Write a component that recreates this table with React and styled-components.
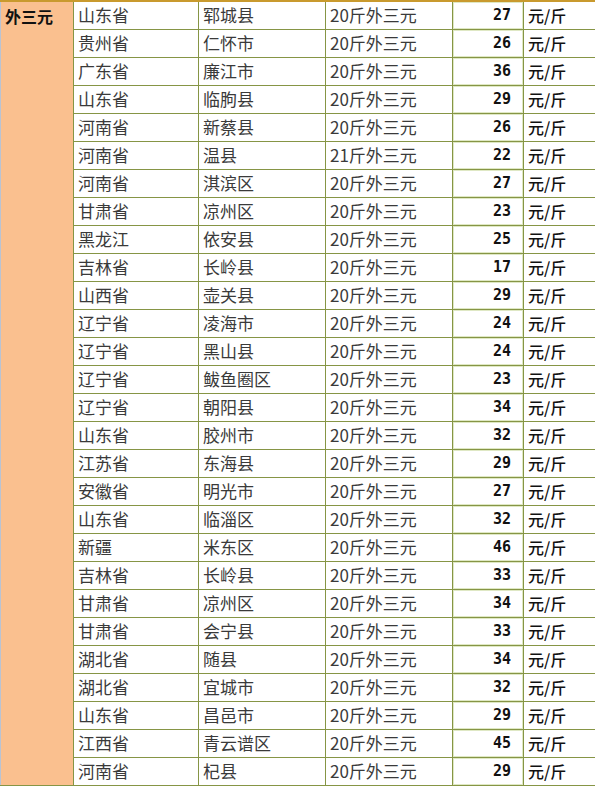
import React from "react";
import styled, { createGlobalStyle } from "styled-components";

const Global = createGlobalStyle`
  html, body { margin: 0; padding: 0; background: #ffffff; }
  body { font-family: "Noto Sans CJK SC", "Noto Sans", sans-serif; }
`;

const rows = [
  ["山东省", "郓城县", "20斤外三元", 27],
  ["贵州省", "仁怀市", "20斤外三元", 26],
  ["广东省", "廉江市", "20斤外三元", 36],
  ["山东省", "临朐县", "20斤外三元", 29],
  ["河南省", "新蔡县", "20斤外三元", 26],
  ["河南省", "温县", "21斤外三元", 22],
  ["河南省", "淇滨区", "20斤外三元", 27],
  ["甘肃省", "凉州区", "20斤外三元", 23],
  ["黑龙江", "依安县", "20斤外三元", 25],
  ["吉林省", "长岭县", "20斤外三元", 17],
  ["山西省", "壶关县", "20斤外三元", 29],
  ["辽宁省", "凌海市", "20斤外三元", 24],
  ["辽宁省", "黑山县", "20斤外三元", 24],
  ["辽宁省", "鲅鱼圈区", "20斤外三元", 23],
  ["辽宁省", "朝阳县", "20斤外三元", 34],
  ["山东省", "胶州市", "20斤外三元", 32],
  ["江苏省", "东海县", "20斤外三元", 29],
  ["安徽省", "明光市", "20斤外三元", 27],
  ["山东省", "临淄区", "20斤外三元", 32],
  ["新疆", "米东区", "20斤外三元", 46],
  ["吉林省", "长岭县", "20斤外三元", 33],
  ["甘肃省", "凉州区", "20斤外三元", 34],
  ["甘肃省", "会宁县", "20斤外三元", 33],
  ["湖北省", "随县", "20斤外三元", 34],
  ["湖北省", "宜城市", "20斤外三元", 32],
  ["山东省", "昌邑市", "20斤外三元", 29],
  ["江西省", "青云谱区", "20斤外三元", 45],
  ["河南省", "杞县", "20斤外三元", 29],
];

const columnWidths = [73, 125, 127, 127, 71, 72];

const Sheet = styled.table`
  border-collapse: collapse;
  table-layout: fixed;
  width: 595px;
  border-top: 2px solid #c99a2e;
`;

const Col = styled.col`
  width: ${(p) => p.$w}px;
`;

const Row = styled.tr`
  height: 28px;
`;

const Cell = styled.td`
  box-sizing: border-box;
  height: 28px;
  padding: 0 0 0 4px;
  border: 1px solid #869545;
  font-size: 17px;
  line-height: 20px;
  color: #3a3a3a;
  white-space: nowrap;
  overflow: hidden;
  vertical-align: middle;
`;

const CategoryCell = styled(Cell)`
  background: #fac08f;
  border-left: 1px solid #b9c3d3;
  vertical-align: top;
  padding: 4px 0 0 4px;
  font-size: 16px;
  font-weight: 700;
  color: #111;
`;

const NumCell = styled(Cell)`
  text-align: right;
  padding: 0 12px 0 0;
  font-family: "DejaVu Sans Mono", "Liberation Mono", monospace;
  font-weight: 700;
  font-size: 15px;
  color: #111;
  box-shadow: inset 0 0 0 1px #dfe8c4;
`;

const UnitCell = styled(Cell)`
  padding-left: 4px;
  font-size: 16px;
  color: #111;
  font-weight: 500;
`;

export default function App() {
  return (
    <>
      <Global />
      <Sheet>
        <colgroup>
          {columnWidths.map((w, i) => (
            <Col key={i} $w={w} />
          ))}
        </colgroup>
        <tbody>
          {rows.map(([prov, county, item, price], i) => (
            <Row key={i}>
              {i === 0 && (
                <CategoryCell rowSpan={rows.length}>外三元</CategoryCell>
              )}
              <Cell>{prov}</Cell>
              <Cell>{county}</Cell>
              <Cell>{item}</Cell>
              <NumCell>{price}</NumCell>
              <UnitCell>元/斤</UnitCell>
            </Row>
          ))}
        </tbody>
      </Sheet>
    </>
  );
}
